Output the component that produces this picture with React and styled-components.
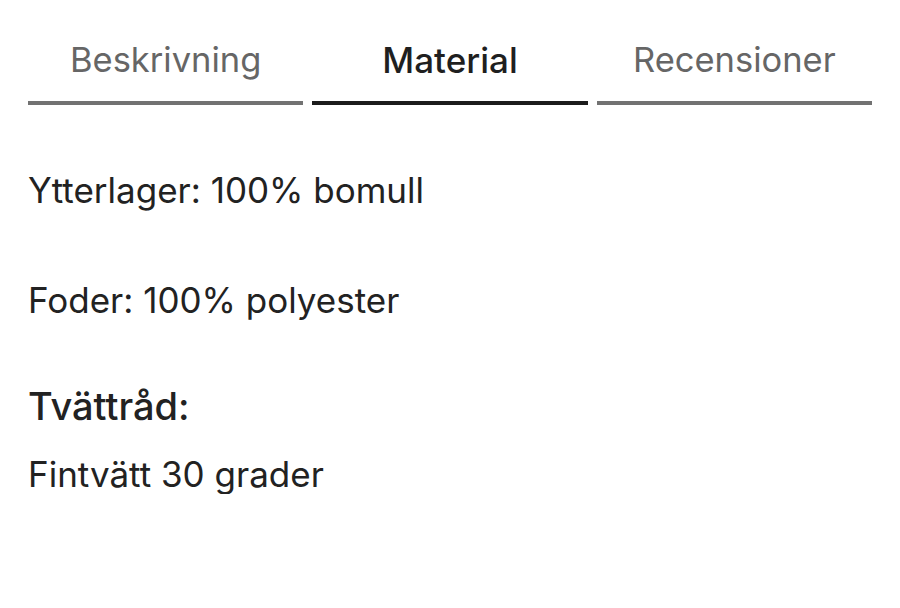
import React, { useState } from 'react';
import styled, { createGlobalStyle } from 'styled-components';

const GlobalStyle = createGlobalStyle`
  body {
    margin: 0;
    background: #fff;
    font-family: Inter, "Noto Sans", sans-serif;
    color: #222;
  }
`;

const Page = styled.div`
  padding: 0 28px;
`;

const TabBar = styled.div`
  display: grid;
  grid-template-columns: repeat(3, 1fr);
  gap: 9px;
`;

const Tab = styled.button`
  appearance: none;
  background: none;
  border: none;
  border-bottom: 4px solid ${p => (p.$active ? '#1c1c1c' : '#727272')};
  padding: 40px 0 21px;
  font-family: inherit;
  font-size: ${p => (p.$active ? 35 : 34.5)}px;
  line-height: 40px;
  font-weight: ${p => (p.$active ? 500 : 400)};
  color: ${p => (p.$active ? '#1f1f1f' : '#666')};
  cursor: pointer;
`;

const Content = styled.div`
  padding-top: 65px;
`;

const Line = styled.p`
  margin: 0 0 ${p => p.$gap || 0}px;
  font-size: 35px;
  line-height: 40px;
`;

const Heading = styled.h3`
  margin: 0 0 26px;
  font-size: 38px;
  font-weight: 500;
  line-height: 44px;
`;

const tabs = ['Beskrivning', 'Material', 'Recensioner'];

const App = () => {
  const [active, setActive] = useState(1);
  return (
    <Page>
      <GlobalStyle />
      <TabBar>
        {tabs.map((t, i) => (
          <Tab key={t} $active={i === active} onClick={() => setActive(i)}>
            {t}
          </Tab>
        ))}
      </TabBar>
      <Content>
        <Line $gap={70}>Ytterlager: 100% bomull</Line>
        <Line $gap={64}>Foder: 100% polyester</Line>
        <Heading>Tvättråd:</Heading>
        <Line>Fintvätt 30 grader</Line>
      </Content>
    </Page>
  );
};

export default App;
